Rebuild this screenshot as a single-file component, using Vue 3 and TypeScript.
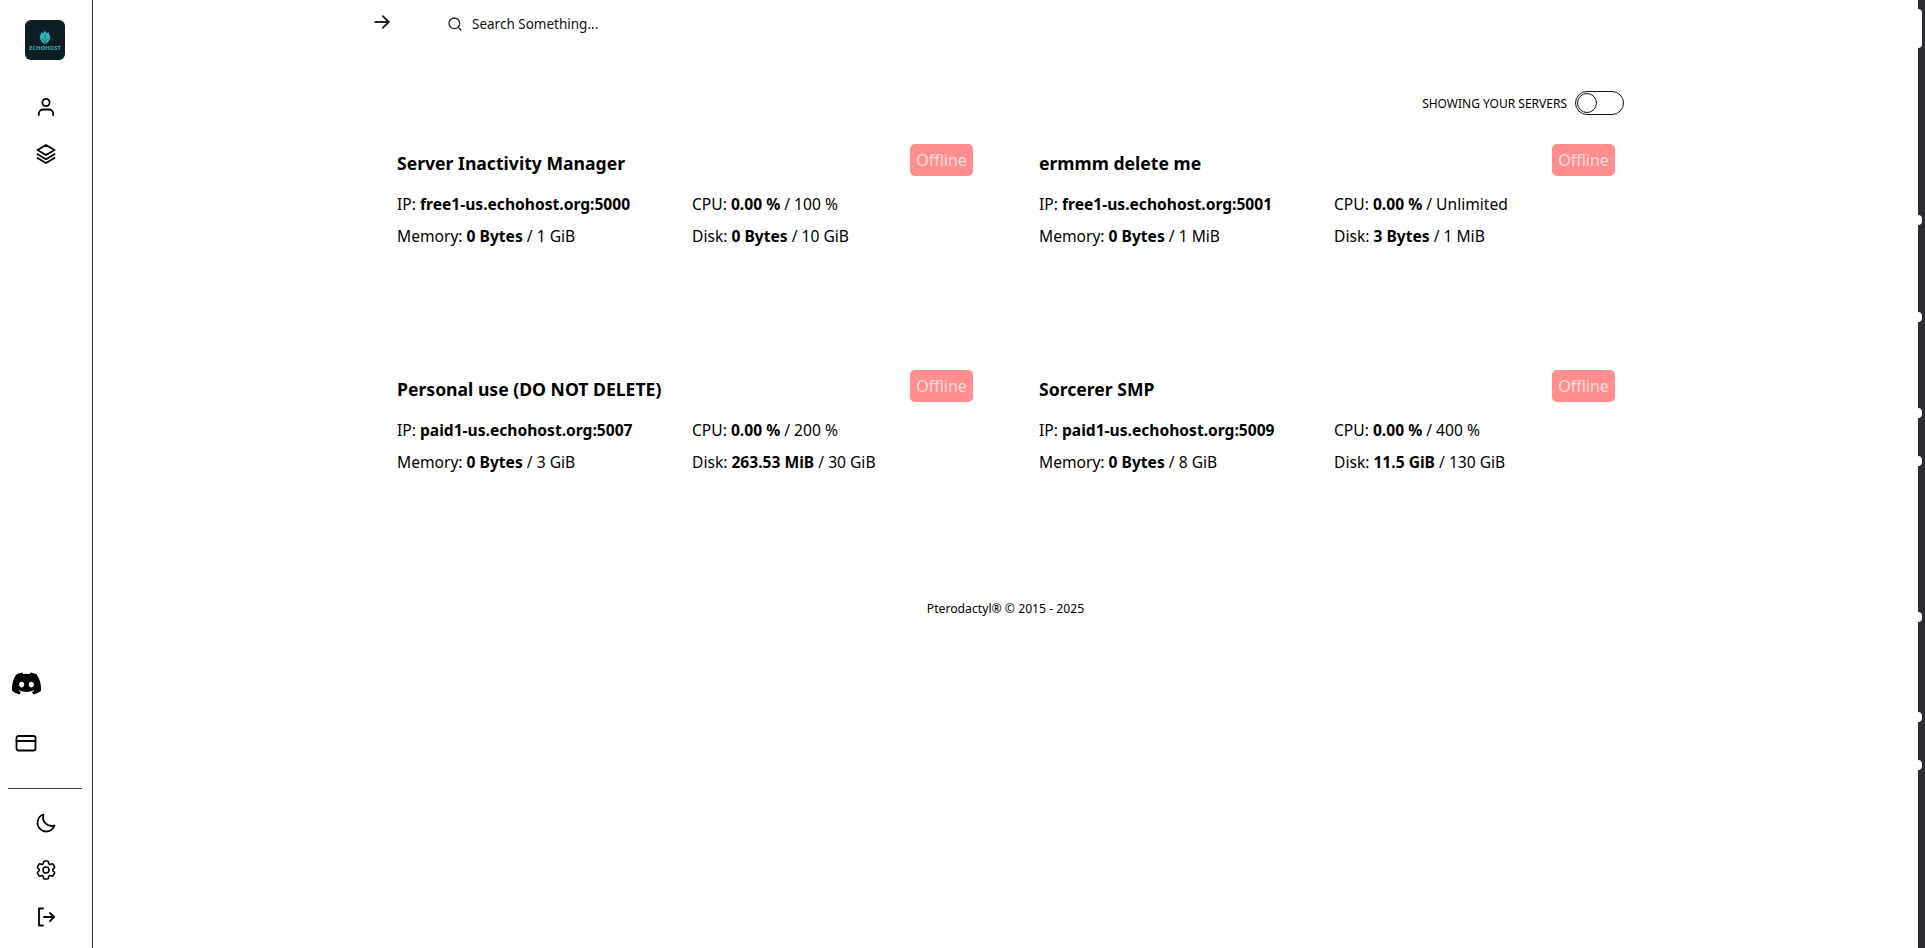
<script setup lang="ts">
interface Server {
  name: string
  ip: string
  cpu: string
  cpuLimit: string
  memory: string
  memoryLimit: string
  disk: string
  diskLimit: string
}

const servers: Server[] = [
  { name: 'Server Inactivity Manager', ip: 'free1-us.echohost.org:5000', cpu: '0.00 %', cpuLimit: '100 %', memory: '0 Bytes', memoryLimit: '1 GiB', disk: '0 Bytes', diskLimit: '10 GiB' },
  { name: 'ermmm delete me', ip: 'free1-us.echohost.org:5001', cpu: '0.00 %', cpuLimit: 'Unlimited', memory: '0 Bytes', memoryLimit: '1 MiB', disk: '3 Bytes', diskLimit: '1 MiB' },
  { name: 'Personal use (DO NOT DELETE)', ip: 'paid1-us.echohost.org:5007', cpu: '0.00 %', cpuLimit: '200 %', memory: '0 Bytes', memoryLimit: '3 GiB', disk: '263.53 MiB', diskLimit: '30 GiB' },
  { name: 'Sorcerer SMP', ip: 'paid1-us.echohost.org:5009', cpu: '0.00 %', cpuLimit: '400 %', memory: '0 Bytes', memoryLimit: '8 GiB', disk: '11.5 GiB', diskLimit: '130 GiB' },
]

const railBumps = [220, 317, 413, 461, 617, 717, 765]
</script>

<template>
  <div class="shell">
    <aside class="sidebar">
      <div class="logo">
        <svg viewBox="0 0 16 14" width="16" height="14" fill="none">
          <path d="M8 0c.3 1.500 1 2.300 1.700 3l2-.8c0 1.600.6 2.500 1.300 3.500.6 2.600-.6 5.300-3 7.300L8 14l-2-1c-2.400-2-3.600-4.700-3-7.300.7-1 1.300-1.900 1.300-3.500l2 .8C7 2.300 7.700 1.500 8 0Z" fill="#2bb4bb" />
          <path d="M8 4v9.500M5 8l3 5.500L11 8" stroke="#127078" stroke-width=".7" />
        </svg>
        <span class="logo-text">ECHOHOST</span>
      </div>

      <nav class="nav-top">
        <a class="nav-icon">
          <svg viewBox="0 0 24 24" width="24" height="24" fill="none" stroke="currentColor" stroke-width="1.8" stroke-linecap="round" stroke-linejoin="round">
            <circle cx="12" cy="7.500" r="3.600" />
            <path d="M4.800 20v-1.200c0-2.600 2-4.300 4.400-4.300h5.600c2.400 0 4.400 1.700 4.400 4.300V20" />
          </svg>
        </a>
        <a class="nav-icon">
          <svg viewBox="0 0 24 24" width="24" height="24" fill="none" stroke="currentColor" stroke-width="1.8" stroke-linecap="round" stroke-linejoin="round">
            <path d="M12 3 3.500 8 12 13l8.500-5L12 3Z" />
            <path d="m3.500 12.200 8.500 5 8.500-5" />
            <path d="m3.500 16 8.500 5 8.500-5" />
          </svg>
        </a>
      </nav>

      <div class="nav-links">
        <a class="nav-link">
          <svg viewBox="0 0 16 16" width="29" height="29" fill="currentColor">
            <path d="M13.545 2.907a13.227 13.227 0 0 0-3.257-1.011.05.05 0 0 0-.052.025c-.141.25-.297.577-.406.833a12.19 12.19 0 0 0-3.658 0 8.258 8.258 0 0 0-.412-.833.051.051 0 0 0-.052-.025c-1.125.194-2.22.534-3.257 1.011a.041.041 0 0 0-.021.018C.356 6.024-.213 9.047.066 12.032c.001.014.01.028.021.037a13.276 13.276 0 0 0 3.995 2.02.05.05 0 0 0 .056-.019c.308-.42.582-.863.818-1.329a.05.05 0 0 0-.01-.059.051.051 0 0 0-.018-.011 8.875 8.875 0 0 1-1.248-.595.05.05 0 0 1-.02-.066.051.051 0 0 1 .015-.019c.084-.063.168-.129.248-.195a.05.05 0 0 1 .051-.007c2.619 1.196 5.454 1.196 8.041 0a.052.052 0 0 1 .053.007c.08.066.164.132.248.195a.051.051 0 0 1-.004.085 8.254 8.254 0 0 1-1.249.594.05.05 0 0 0-.03.03.052.052 0 0 0 .003.041c.24.465.515.909.817 1.329a.05.05 0 0 0 .056.019 13.235 13.235 0 0 0 4.001-2.02.049.049 0 0 0 .021-.037c.334-3.451-.559-6.449-2.366-9.106a.034.034 0 0 0-.02-.019Zm-8.198 7.307c-.789 0-1.438-.724-1.438-1.612 0-.889.637-1.613 1.438-1.613.807 0 1.45.73 1.438 1.613 0 .888-.637 1.612-1.438 1.612Zm5.316 0c-.788 0-1.438-.724-1.438-1.612 0-.889.637-1.613 1.438-1.613.807 0 1.451.73 1.438 1.613 0 .888-.631 1.612-1.438 1.612Z" />
          </svg>
        </a>
        <a class="nav-link card-icon">
          <svg viewBox="0 0 24 24" width="24" height="24" fill="none" stroke="currentColor" stroke-width="1.800" stroke-linecap="round" stroke-linejoin="round">
            <rect x="2.500" y="5" width="19" height="14.500" rx="2" />
            <path d="M2.500 10h19" />
          </svg>
        </a>
      </div>

      <div class="divider"></div>

      <nav class="nav-bottom">
        <a class="nav-icon">
          <svg viewBox="0 0 24 24" width="24" height="24" fill="none" stroke="currentColor" stroke-width="1.8" stroke-linecap="round" stroke-linejoin="round">
            <path d="M20.500 14.500A8.700 8.700 0 0 1 9.500 3.500a8.700 8.700 0 1 0 11 11Z" />
          </svg>
        </a>
        <a class="nav-icon">
          <svg viewBox="0 0 24 24" width="24" height="24" fill="none" stroke="currentColor" stroke-width="1.6" stroke-linecap="round" stroke-linejoin="round">
            <path d="M9.594 3.940c.09-.542.56-.94 1.110-.94h2.593c.55 0 1.020.398 1.110.94l.213 1.281c.063.374.313.686.645.870.074.04.147.083.22.127.325.196.72.257 1.075.124l1.217-.456a1.125 1.125 0 0 1 1.370.49l1.296 2.247a1.125 1.125 0 0 1-.26 1.431l-1.003.827c-.293.241-.438.613-.43.992a7.723 7.723 0 0 1 0 .255c-.008.378.137.75.43.991l1.004.827c.424.35.534.955.26 1.430l-1.298 2.247a1.125 1.125 0 0 1-1.369.491l-1.217-.456c-.355-.133-.75-.072-1.076.124a6.470 6.470 0 0 1-.22.128c-.331.183-.581.495-.644.869l-.213 1.281c-.09.543-.56.94-1.110.94h-2.594c-.55 0-1.019-.398-1.110-.94l-.213-1.281c-.062-.374-.312-.686-.644-.87a6.520 6.520 0 0 1-.22-.127c-.325-.196-.72-.257-1.076-.124l-1.217.456a1.125 1.125 0 0 1-1.369-.49l-1.297-2.247a1.125 1.125 0 0 1 .26-1.431l1.004-.827c.292-.24.437-.613.43-.991a6.932 6.932 0 0 1 0-.255c.007-.38-.138-.751-.43-.992l-1.004-.827a1.125 1.125 0 0 1-.26-1.430l1.297-2.247a1.125 1.125 0 0 1 1.370-.491l1.216.456c.356.133.751.072 1.076-.124.072-.044.146-.086.22-.128.332-.183.582-.495.644-.869l.214-1.280Z" />
            <circle cx="12" cy="12" r="3" />
          </svg>
        </a>
        <a class="nav-icon">
          <svg viewBox="0 0 24 24" width="24" height="24" fill="none" stroke="currentColor" stroke-width="1.8" stroke-linecap="round" stroke-linejoin="round">
            <path d="M9 3.500H5v17h4" />
            <path d="M10 12h10" />
            <path d="m16 8 4 4-4 4" />
          </svg>
        </a>
      </nav>
    </aside>

    <main class="main">
      <header class="topbar">
        <svg class="arrow" viewBox="0 0 24 24" width="20" height="20" fill="none" stroke="#1f1f1f" stroke-width="2.200" stroke-linecap="round" stroke-linejoin="round">
          <path d="M4 12h16" />
          <path d="m13 5 7 7-7 7" />
        </svg>
        <div class="search">
          <svg viewBox="0 0 24 24" width="16" height="16" fill="none" stroke="#222" stroke-width="2" stroke-linecap="round" stroke-linejoin="round">
            <circle cx="11" cy="11" r="8" />
            <path d="m21 21-4.300-4.300" />
          </svg>
          <span>Search Something...</span>
        </div>
      </header>

      <div class="filter">
        <span class="filter-label">SHOWING YOUR SERVERS</span>
        <span class="toggle"><span class="knob"></span></span>
      </div>

      <section class="grid">
        <article v-for="server in servers" :key="server.ip" class="card">
          <div class="card-head">
            <h3>{{ server.name }}</h3>
            <span class="badge">Offline</span>
          </div>
          <div class="stats">
            <div>IP: <b>{{ server.ip }}</b></div>
            <div>CPU: <b>{{ server.cpu }}</b> / {{ server.cpuLimit }}</div>
            <div>Memory: <b>{{ server.memory }}</b> / {{ server.memoryLimit }}</div>
            <div>Disk: <b>{{ server.disk }}</b> / {{ server.diskLimit }}</div>
          </div>
        </article>
      </section>

      <footer class="footer">Pterodactyl® © 2015 - 2025</footer>
    </main>

    <div class="rail">
      <span class="rail-top"></span>
      <span v-for="y in railBumps" :key="y" class="bump" :style="{ top: y - 5 + 'px' }"></span>
    </div>
  </div>
</template>

<style>
html,
body {
  margin: 0;
  background: #fff;
  overflow: hidden;
}
</style>

<style scoped>
.shell {
  display: flex;
  height: 948px;
  font-family: "Noto Sans", "Open Sans", sans-serif;
  color: #000;
  font-size: 14px;
}

.sidebar {
  width: 92px;
  flex-shrink: 0;
  border-right: 1px solid #2e2b3d;
  display: flex;
  flex-direction: column;
  align-items: center;
  padding-top: 20px;
  box-sizing: content-box;
}

.logo {
  width: 40px;
  height: 40px;
  margin-left: -2px;
  border-radius: 6px;
  background: #0c1d24;
  display: flex;
  flex-direction: column;
  align-items: center;
  justify-content: center;
}

.logo svg {
  margin-top: 1px;
}

.logo-text {
  font-size: 5.500px;
  line-height: 8px;
  font-weight: 700;
  color: #3fb8c0;
  letter-spacing: 0.2px;
}

.nav-top {
  margin-top: 35px;
  display: flex;
  flex-direction: column;
  gap: 23px;
}

.nav-icon {
  display: flex;
  width: 24px;
  height: 24px;
  color: #000;
}

.nav-links {
  margin-top: auto;
  align-self: flex-start;
  padding-left: 12px;
  display: flex;
  flex-direction: column;
  align-items: center;
  gap: 33px;
}

.nav-link {
  display: flex;
  color: #000;
}

.card-icon {
  margin-left: -1px;
}

.divider {
  width: 74px;
  margin: 33px 0 0 8px;
  align-self: flex-start;
  border-top: 1px solid #3f3a5a;
}

.nav-bottom {
  margin-top: 22px;
  margin-bottom: 19px;
  display: flex;
  flex-direction: column;
  gap: 23px;
}

.main {
  flex: 1;
  min-width: 0;
  padding-left: 279px;
  padding-right: 286px;
}

.topbar {
  height: 48px;
  display: flex;
  align-items: center;
  gap: 55px;
}

.arrow {
  margin-top: -4px;
}

.search {
  display: flex;
  align-items: center;
  gap: 9px;
  font-size: 13.500px;
  color: #111;
}

.filter {
  margin-top: 43px;
  display: flex;
  justify-content: flex-end;
  align-items: center;
  gap: 8px;
  font-size: 12px;
  height: 24px;
  padding-right: 15px;
}

.toggle {
  width: 46px;
  height: 22px;
  border: 1px solid #111;
  border-radius: 12px;
  display: flex;
  align-items: center;
  padding-left: 1px;
}

.knob {
  width: 20px;
  height: 20px;
  border-radius: 50%;
  border: 1px solid #111;
  box-sizing: border-box;
}

.grid {
  margin-top: 29px;
  padding-left: 25px;
  display: grid;
  grid-template-columns: 642px 642px;
  grid-auto-rows: 226px;
}

.card {
  box-sizing: border-box;
  padding-right: 66px;
}

.card-head {
  display: flex;
  justify-content: space-between;
  align-items: flex-start;
  height: 44px;
}

.card-head h3 {
  margin: 7px 0 0;
  font-size: 17.600px;
  line-height: 24px;
  font-weight: 700;
}

.badge {
  width: 63px;
  height: 32px;
  line-height: 32px;
  text-align: center;
  border-radius: 5px;
  background: #ff8e8e;
  color: #ffdcdc;
  font-size: 16px;
}

.stats {
  display: grid;
  grid-template-columns: 295px 1fr;
  grid-auto-rows: 32px;
  line-height: 32px;
  font-size: 15.600px;
}

.stats b {
  font-weight: 700;
}

.footer {
  margin-top: 3px;
  text-align: center;
  font-size: 12.200px;
  line-height: 20px;
}

.rail {
  position: fixed;
  top: 0;
  right: 0;
  bottom: 0;
  width: 7px;
  background: #2c2c31;
}

.rail-top {
  position: absolute;
  top: 9px;
  left: 0;
  width: 4px;
  height: 39px;
  background: #fff;
  border-radius: 0 4px 4px 0;
}

.bump {
  position: absolute;
  left: 0;
  width: 4px;
  height: 10px;
  background: #fff;
  border-radius: 0 5px 5px 0;
}
</style>
